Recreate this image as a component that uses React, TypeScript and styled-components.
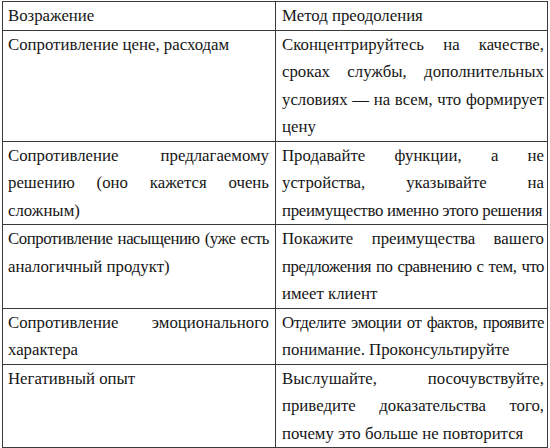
import React from "react";
import styled, { createGlobalStyle } from "styled-components";

const Global = createGlobalStyle`
  html, body { margin: 0; padding: 0; background: #fff; }
  body { font-family: "Liberation Serif", "Times New Roman", serif; color: #1a1a1a; }
`;

const Page = styled.div`
  padding: 1px 0 0 2px;
  width: 550px;
  height: 448px;
  box-sizing: border-box;
  overflow: hidden;
`;

const Table = styled.table`
  border-collapse: collapse;
  width: 545px;
  table-layout: fixed;
  font-family: "Liberation Serif", "Times New Roman", serif;
  font-size: 16.8px;
  color: #161616;
`;

const Col = styled.col<{ $w: number }>`
  width: ${(p) => p.$w}px;
`;

const Cell = styled.td<{ $right?: boolean }>`
  border: 1px solid #3a3a3a;
  padding: 0 ${(p) => (p.$right ? "3px" : "6px")} 0 ${(p) => (p.$right ? "6px" : "5px")};
  vertical-align: top;
  font-family: "Liberation Serif", "Times New Roman", serif;
  font-size: 16.8px;
  line-height: 27.5px;
  color: #161616;
`;

const Line = styled.span<{ $last?: boolean; $ls: number }>`
  display: block;
  white-space: nowrap;
  text-align: ${(p) => (p.$last ? "left" : "justify")};
  text-align-last: ${(p) => (p.$last ? "left" : "justify")};
  letter-spacing: ${(p) => p.$ls}px;
`;

type L = string | { t: string; ls: number };

const rows: [L[], L[]][] = [
  [["Возражение"], ["Метод преодоления"]],
  [
    ["Сопротивление цене, расходам"],
    [
      "Сконцентрируйтесь на качестве,",
      "сроках службы, дополнительных",
      "условиях — на всем, что формирует",
      "цену",
    ],
  ],
  [
    ["Сопротивление предлагаемому", "решению (оно кажется очень", "сложным)"],
    [
      "Продавайте функции, а не",
      "устройства, указывайте на",
      { t: "преимущество именно этого решения", ls: -0.3 },
    ],
  ],
  [
    [{ t: "Сопротивление насыщению (уже есть", ls: -0.45 }, "аналогичный продукт)"],
    [
      "Покажите преимущества вашего",
      { t: "предложения по сравнению с тем, что", ls: -0.45 },
      "имеет клиент",
    ],
  ],
  [
    ["Сопротивление эмоционального", "характера"],
    [{ t: "Отделите эмоции от фактов, проявите", ls: -0.45 }, "понимание. Проконсультируйте"],
  ],
  [
    ["Негативный опыт"],
    [
      "Выслушайте, посочувствуйте,",
      "приведите доказательства того,",
      "почему это больше не повторится",
    ],
  ],
];

function Lines({ lines }: { lines: L[] }) {
  return (
    <>
      {lines.map((l, i) => {
        const text = typeof l === "string" ? l : l.t;
        const ls = typeof l === "string" ? 0 : l.ls;
        return (
          <Line key={i} $last={i === lines.length - 1} $ls={ls}>
            {text}
          </Line>
        );
      })}
    </>
  );
}

export default function App() {
  return (
    <Page>
      <Global />
      <Table>
        <colgroup>
          <Col $w={273} />
          <Col $w={272} />
        </colgroup>
        <tbody>
          {rows.map(([a, b], i) => (
            <tr key={i}>
              <Cell>
                <Lines lines={a} />
              </Cell>
              <Cell $right>
                <Lines lines={b} />
              </Cell>
            </tr>
          ))}
        </tbody>
      </Table>
    </Page>
  );
}
